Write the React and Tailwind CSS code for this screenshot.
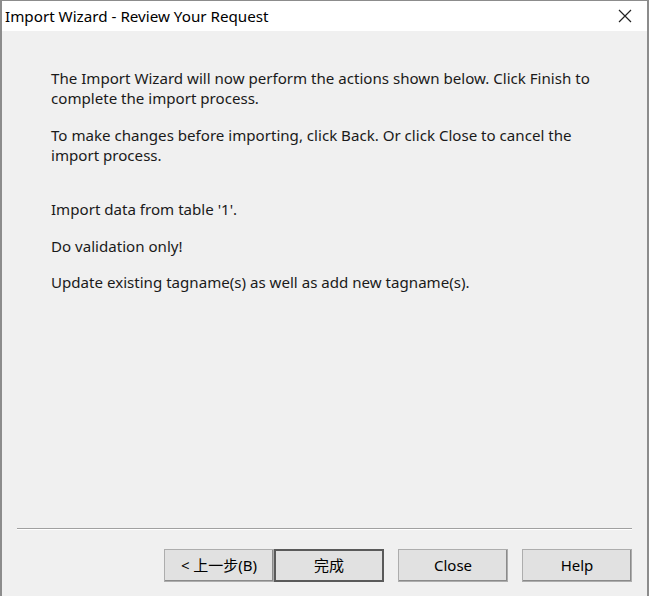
import React from "react";

const font = { fontFamily: '"Noto Sans", "Noto Sans CJK SC", sans-serif' };

function WizardButton({ label, isDefault = false }) {
  return (
    <button
      className={
        "h-[33px] w-[110px] bg-[#e1e1e1] text-[15px] text-black flex items-center justify-center " +
        (isDefault
          ? "border-2 border-[#5a5a5a]"
          : "border border-[#adadad] shadow-[inset_-1px_-1px_0_#8a8a8a]")
      }
    >
      {label}
    </button>
  );
}

export default function App() {
  return (
    <div
      className="w-[649px] h-[596px] flex flex-col bg-[#f0f0f0] border-l-2 border-r-2 border-t border-[#8c8c8c] text-[#1a1a1a] overflow-hidden"
      style={font}
    >
      {/* title bar */}
      <div className="h-[30px] bg-white flex items-center justify-between pl-[3px] pr-[15px] shrink-0">
        <span className="text-[15.2px] text-black">Import Wizard - Review Your Request</span>
        <svg width="14" height="14" viewBox="0 0 14 14">
          <path d="M1 1 L13 13 M13 1 L1 13" stroke="#222" strokeWidth="1.2" />
        </svg>
      </div>

      <div className="flex-1 flex flex-col pl-[49px] pr-[40px] pt-[37px] text-[15.1px] leading-[20px]">
        <p>
          The Import Wizard will now perform the actions shown below. Click Finish to
          complete the import process.
        </p>
        <p className="mt-[17px]">
          To make changes before importing, click Back. Or click Close to cancel the
          import process.
        </p>
        <p className="mt-[34px]">Import data from table '1'.</p>
        <p className="mt-[17px]">Do validation only!</p>
        <p className="mt-[16px]">Update existing tagname(s) as well as add new tagname(s).</p>
      </div>

      <div className="shrink-0 pl-[15px] pr-[15px]">
        <div className="h-[2px] border-t border-[#a0a0a0] border-b border-b-white" />
      </div>

      <div className="shrink-0 flex justify-end items-center pr-[15px] pt-[19px] pb-[14px]">
        <div className="flex">
          <WizardButton label="< 上一步(B)" />
          <WizardButton label="完成" isDefault />
        </div>
        <div className="flex gap-[14px] ml-[14px]">
          <WizardButton label="Close" />
          <WizardButton label="Help" />
        </div>
      </div>
    </div>
  );
}
